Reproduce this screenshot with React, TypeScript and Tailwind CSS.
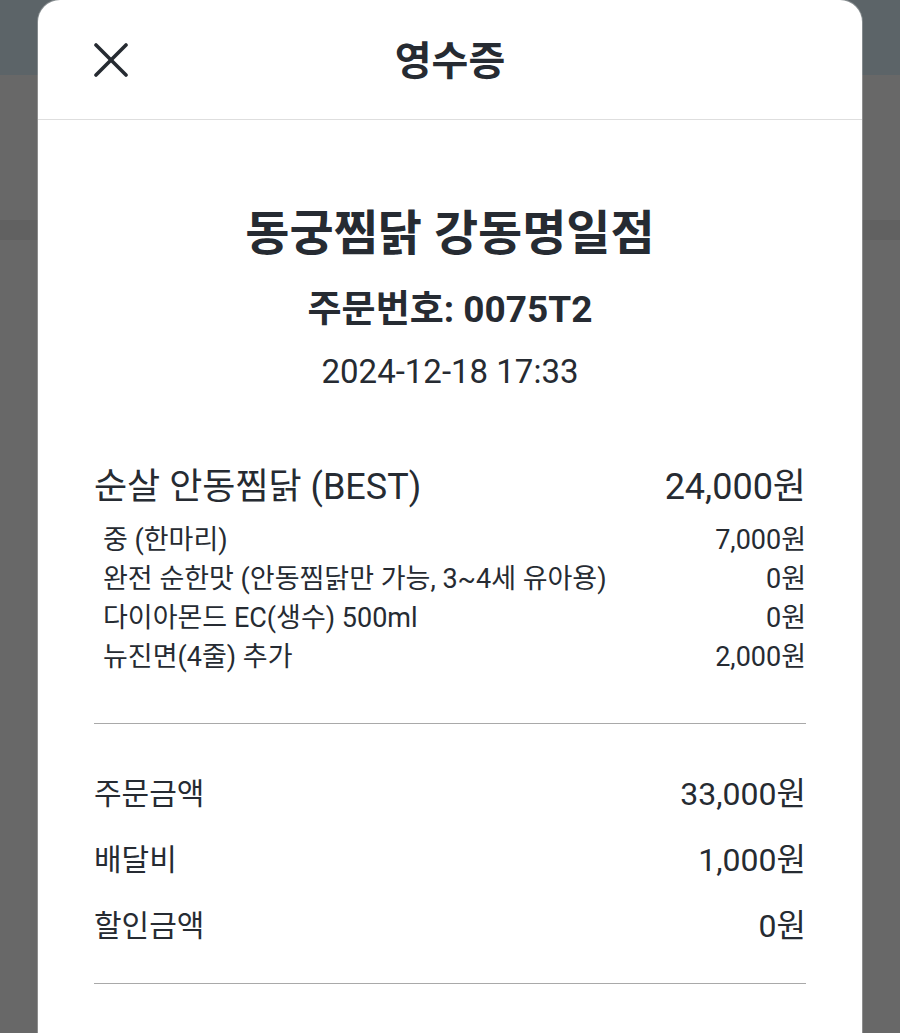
import { useState } from 'react';

const font = { fontFamily: 'Roboto, "Noto Sans CJK KR", sans-serif' };

const options = [
    { name: '중 (한마리)', price: '7,000원' },
    { name: '완전 순한맛 (안동찜닭만 가능, 3~4세 유아용)', price: '0원' },
    { name: '다이아몬드 EC(생수) 500ml', price: '0원' },
    { name: '뉴진면(4줄) 추가', price: '2,000원' },
];

const totals = [
    { label: '주문금액', value: '33,000원' },
    { label: '배달비', value: '1,000원' },
    { label: '할인금액', value: '0원' },
];

export default function App() {
    const [open, setOpen] = useState(true);

    return (
        <div className="relative h-[1033px] w-[900px] overflow-hidden bg-[#686868]" style={font}>
            {/* dimmed page behind the sheet */}
            <div className="h-[75px] bg-[#5c6468]" />
            <div className="h-[145px] bg-[#686868]" />
            <div className="h-[20px] bg-[#616161]" />

            {open && (
                <div className="absolute left-[38px] top-0 h-[1100px] w-[824px] rounded-t-[22px] bg-white text-[#262b32] shadow-[0_0_0_1px_rgba(255,255,255,0.25)]">
                    <div className="relative flex h-[120px] items-center border-b border-[#dedede] px-[56px]">
                        <button onClick={() => setOpen(false)} className="flex h-[34px] w-[34px] items-center justify-center">
                            <svg width="34" height="34" viewBox="0 0 34 34" fill="none" stroke="#262b32" strokeWidth="3.6" strokeLinecap="round">
                                <path d="M2 2 L32 32" />
                                <path d="M32 2 L2 32" />
                            </svg>
                        </button>
                        <h1 className="absolute inset-x-0 top-[38px] text-center text-[40px] font-bold leading-[48px]">영수증</h1>
                    </div>

                    <div className="px-[56px]">
                        <div className="mt-[86px] text-center">
                            <h2 className="text-[48px] font-bold leading-[56px]">동궁찜닭 강동명일점</h2>
                            <p className="mt-[26px] text-[37px] font-bold leading-[44px]">주문번호: 0075T2</p>
                            <p className="mt-[20px] text-[33px] leading-[40px]">2024-12-18 17:33</p>
                        </div>

                        <div className="mt-[73px]">
                            <div className="flex items-center justify-between text-[36px] leading-[44px]">
                                <span>순살 안동찜닭 (BEST)</span>
                                <span>24,000원</span>
                            </div>
                            <div className="mt-[12px]">
                                {options.map(o => (
                                    <div key={o.name} className="flex items-center justify-between pl-[9px] text-[27px] leading-[39px]">
                                        <span>{o.name}</span>
                                        <span>{o.price}</span>
                                    </div>
                                ))}
                            </div>
                        </div>

                        <div className="mt-[46px] border-t border-[#a9a9a9]" />

                        <div className="mt-[37px]">
                            {totals.map(t => (
                                <div key={t.label} className="flex items-center justify-between leading-[66px]">
                                    <span className="text-[30px]">{t.label}</span>
                                    <span className="text-[32px]">{t.value}</span>
                                </div>
                            ))}
                        </div>

                        <div className="mt-[24px] border-t border-[#a9a9a9]" />
                    </div>
                </div>
            )}
        </div>
    );
}
